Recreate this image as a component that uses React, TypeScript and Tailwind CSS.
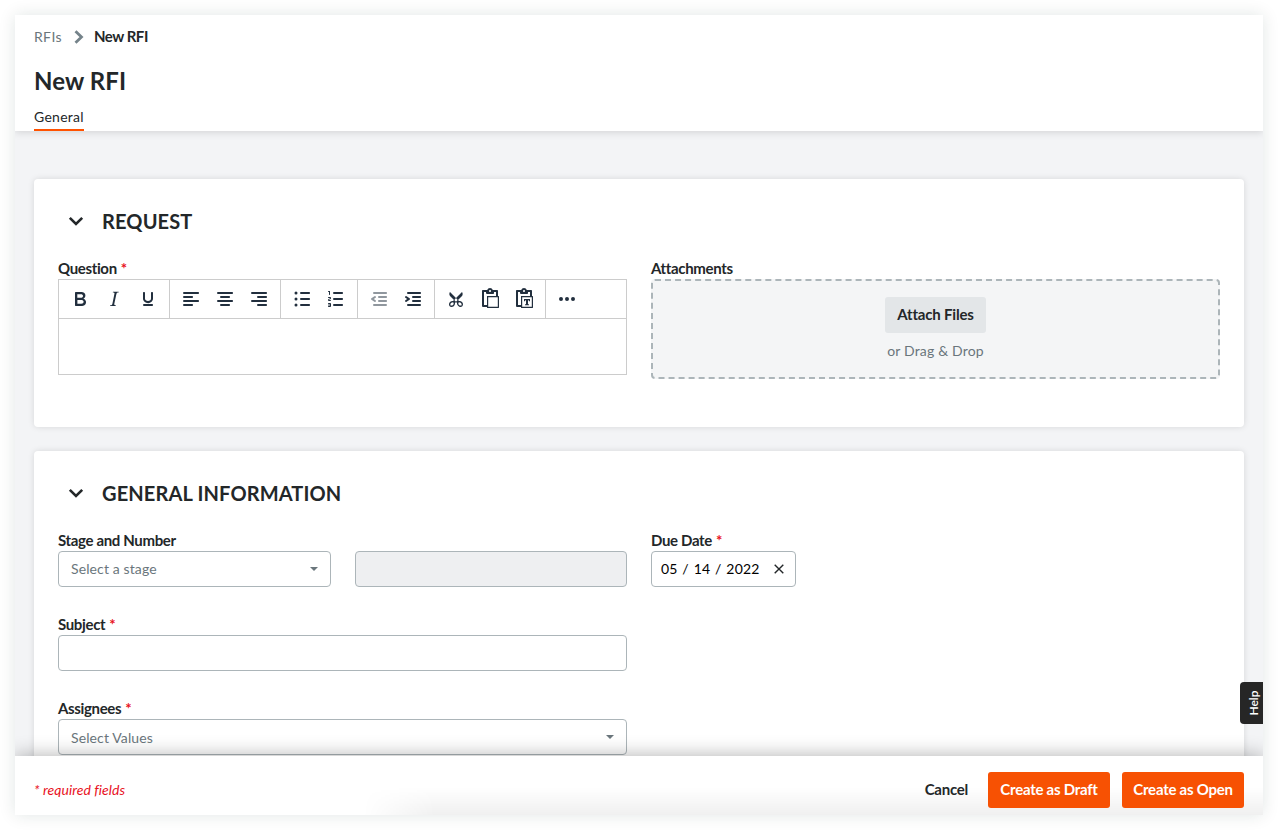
import { useState } from 'react'
import type { ReactNode } from 'react'

const ALIGN_LEFT = 'M5 5h14c.6 0 1 .4 1 1s-.4 1-1 1H5a1 1 0 110-2zm0 4h8c.6 0 1 .4 1 1s-.4 1-1 1H5a1 1 0 110-2zm0 8h8c.6 0 1 .4 1 1s-.4 1-1 1H5a1 1 0 010-2zm0-4h14c.6 0 1 .4 1 1s-.4 1-1 1H5a1 1 0 010-2z'
const ALIGN_CENTER = 'M5 5h14c.6 0 1 .4 1 1s-.4 1-1 1H5a1 1 0 110-2zm3 4h8c.6 0 1 .4 1 1s-.4 1-1 1H8a1 1 0 110-2zm0 8h8c.6 0 1 .4 1 1s-.4 1-1 1H8a1 1 0 010-2zm-3-4h14c.6 0 1 .4 1 1s-.4 1-1 1H5a1 1 0 010-2z'
const ALIGN_RIGHT = 'M5 5h14c.6 0 1 .4 1 1s-.4 1-1 1H5a1 1 0 110-2zm6 4h8c.6 0 1 .4 1 1s-.4 1-1 1h-8a1 1 0 010-2zm0 8h8c.6 0 1 .4 1 1s-.4 1-1 1h-8a1 1 0 010-2zm-6-4h14c.6 0 1 .4 1 1s-.4 1-1 1H5a1 1 0 010-2z'
const BOLD = 'M7.8 19c-.3 0-.5 0-.6-.2l-.2-.5V5.7c0-.2 0-.4.2-.5l.6-.2h5c1.5 0 2.7.3 3.5 1 .7.6 1.1 1.4 1.1 2.5a3 3 0 01-.6 1.9c-.4.6-1 1-1.6 1.2.4.1.9.3 1.3.6s.8.7 1 1.2c.4.4.5 1 .5 1.6 0 1.3-.4 2.3-1.3 3-.8.7-2.1 1-3.8 1H7.8zm5-8.3c.6 0 1.2-.1 1.6-.5.4-.3.6-.7.6-1.3 0-1.1-.8-1.7-2.3-1.7H9.3v3.5h3.4zm.5 6c.7 0 1.3-.1 1.7-.4.4-.4.6-.9.6-1.5s-.2-1-.7-1.4c-.4-.3-1-.4-2-.4H9.4v3.8h4z'
const ITALIC = 'M16.7 4.7l-.1.9h-.3c-.6 0-1 0-1.4.3-.3.3-.4.6-.5 1.1l-2.1 9.8v.6c0 .5.4.8 1.4.8h.2l-.2.8H8l.2-.8h.2c1.1 0 1.8-.5 2-1.5l2-9.8.1-.5c0-.6-.4-.8-1.4-.8h-.3l.2-.9h5.8z'
const UNDERLINE = 'M16 5c.6 0 1 .4 1 1v5.5a4 4 0 01-.4 1.8l-1 1.4a5.3 5.3 0 01-5.5 1 5 5 0 01-1.6-1c-.5-.4-.8-.9-1.1-1.4a4 4 0 01-.4-1.8V6c0-.6.4-1 1-1s1 .4 1 1v5.5c0 .3 0 .6.2 1l.6.7a3.3 3.3 0 002.2.8 3.4 3.4 0 002.2-.8c.3-.2.4-.5.6-.8l.2-.9V6c0-.6.4-1 1-1zM8 17h8c.6 0 1 .4 1 1s-.4 1-1 1H8a1 1 0 010-2z'
const BULLETS = 'M11 5h8c.6 0 1 .4 1 1s-.4 1-1 1h-8a1 1 0 010-2zm0 6h8c.6 0 1 .4 1 1s-.4 1-1 1h-8a1 1 0 010-2zm0 6h8c.6 0 1 .4 1 1s-.4 1-1 1h-8a1 1 0 010-2zM4.5 6a1.5 1.5 0 013 0 1.5 1.5 0 01-3 0zm0 6a1.5 1.5 0 013 0 1.5 1.5 0 01-3 0zm0 6a1.5 1.5 0 013 0 1.5 1.5 0 01-3 0z'
const NUMBERS = 'M10 17h8c.6 0 1 .4 1 1s-.4 1-1 1h-8a1 1 0 010-2zm0-6h8c.6 0 1 .4 1 1s-.4 1-1 1h-8a1 1 0 010-2zm0-6h8c.6 0 1 .4 1 1s-.4 1-1 1h-8a1 1 0 110-2zM6 4v3.5c0 .3-.2.5-.5.5a.5.5 0 01-.5-.5V5h-.5a.5.5 0 010-1H6zm-1 8.8l.2.2h1.3c.3 0 .5.2.5.5s-.2.5-.5.5H4.9a1 1 0 01-.9-1V13c0-.4.3-.8.6-1l1.2-.4.2-.3a.2.2 0 00-.2-.2H4.5a.5.5 0 01-.5-.5c0-.3.2-.5.5-.5h1.6c.5 0 .9.4.9 1v.1c0 .4-.3.8-.6 1l-1.2.4-.2.3zM7 17v2c0 .6-.4 1-1 1H4.5a.5.5 0 010-1h1.2c.2 0 .3-.1.3-.3 0-.2-.1-.3-.3-.3H4.4a.4.4 0 110-.8h1.3c.2 0 .3-.1.3-.3 0-.2-.1-.3-.3-.3H4.5a.5.5 0 110-1H6c.6 0 1 .4 1 1z'
const OUTDENT = 'M7 5h12c.6 0 1 .4 1 1s-.4 1-1 1H7a1 1 0 110-2zm5 4h7c.6 0 1 .4 1 1s-.4 1-1 1h-7a1 1 0 010-2zm0 4h7c.6 0 1 .4 1 1s-.4 1-1 1h-7a1 1 0 010-2zm-5 4h12a1 1 0 010 2H7a1 1 0 010-2zm1.6-3.8a1 1 0 01-1.2 1.6l-3-2a1 1 0 010-1.6l3-2a1 1 0 011.2 1.6L6.8 12l1.8 1.2z'
const INDENT = 'M7 5h12c.6 0 1 .4 1 1s-.4 1-1 1H7a1 1 0 110-2zm5 4h7c.6 0 1 .4 1 1s-.4 1-1 1h-7a1 1 0 010-2zm0 4h7c.6 0 1 .4 1 1s-.4 1-1 1h-7a1 1 0 010-2zm-5 4h12a1 1 0 010 2H7a1 1 0 010-2zm-2.6-3.8L6.2 12l-1.8-1.2a1 1 0 011.2-1.6l3 2a1 1 0 010 1.6l-3 2a1 1 0 11-1.2-1.6z'
const CUT = 'M18 15c.6.7 1 1.4 1 2.3 0 .8-.2 1.5-.7 2l-.8.5-1 .2c-.4 0-.8 0-1.2-.3a3.9 3.9 0 01-2.1-2.2c-.2-.5-.3-1-.2-1.5l-1-1-1 1c0 .5 0 1-.2 1.5-.1.5-.4 1-.9 1.4-.3.4-.7.6-1.2.8l-1.2.3c-.4 0-.7 0-1-.2-.3 0-.6-.3-.8-.5-.5-.5-.8-1.2-.7-2 0-.9.4-1.6 1-2.2A3.7 3.7 0 018.6 14H9l1-1-4-4-.5-1a3.3 3.3 0 010-2c0-.4.3-.7.5-1l6 6 6-6 .5 1a3.3 3.3 0 010 2c0 .4-.3.7-.5 1l-4 4 1 1h.5c.4 0 .8 0 1.2.3.5.2.9.4 1.2.8zm-8.5 2.2l.1-.4v-.3-.4a1 1 0 00-.2-.5 1 1 0 00-.4-.2 1.6 1.6 0 00-.8 0 2.6 2.6 0 00-.8.3 2.5 2.5 0 00-.9 1.1l-.1.4v.7l.2.5.5.2h.7a2.5 2.5 0 00.8-.3 2.8 2.8 0 001-1zm2.5-2.8c.4 0 .7-.1 1-.4.3-.3.4-.6.4-1s-.1-.7-.4-1c-.3-.3-.6-.4-1-.4s-.7.1-1 .4c-.3.3-.4.6-.4 1s.1.7.4 1c.3.3.6.4 1 .4zm5.4 4l.2-.5v-.4-.3a2.6 2.6 0 00-.3-.8 2.4 2.4 0 00-.7-.7 2.5 2.5 0 00-.8-.3 1.5 1.5 0 00-.8 0 1 1 0 00-.4.2 1 1 0 00-.2.5 1.5 1.5 0 000 .7v.4l.3.4.3.4a2.8 2.8 0 00.8.5l.4.1h.7l.5-.2z'
const PASTE = 'M18 9V5h-2v1c0 .6-.4 1-1 1H9a1 1 0 01-1-1V5H6v13h3V9h9zM9 20H5a1 1 0 01-1-1V4c0-.6.4-1 1-1h4.2A3 3 0 0112 1a3 3 0 012.8 2H19c.6 0 1 .4 1 1v5h.5c.3 0 .5.2.5.5v11c0 .3-.2.5-.5.5h-11a.5.5 0 01-.5-.5V20zm1.2-9.8v9.6h9.6v-9.6h-9.6zM12 3a1 1 0 00-1 1c0 .5.4 1 1 1s1-.5 1-1-.4-1-1-1z'
const PASTE_TEXT = PASTE + 'M12 12h6v2.2h-.9l-.4-1H16v4.1h1v1h-4v-1h1v-4.1h-.7l-.4 1H12z'
const MORE = 'M6 10a2 2 0 100 4 2 2 0 000-4zm12 0a2 2 0 100 4 2 2 0 000-4zm-6 0a2 2 0 100 4 2 2 0 000-4z'

const toolbar = [
  [{ name: 'Bold', d: BOLD }, { name: 'Italic', d: ITALIC }, { name: 'Underline', d: UNDERLINE }],
  [{ name: 'Align left', d: ALIGN_LEFT }, { name: 'Align center', d: ALIGN_CENTER }, { name: 'Align right', d: ALIGN_RIGHT }],
  [{ name: 'Bullet list', d: BULLETS }, { name: 'Numbered list', d: NUMBERS }],
  [{ name: 'Decrease indent', d: OUTDENT, disabled: true }, { name: 'Increase indent', d: INDENT }],
  [{ name: 'Cut', d: CUT }, { name: 'Paste', d: PASTE }, { name: 'Paste as text', d: PASTE_TEXT }],
  [{ name: 'More', d: MORE }],
]

function Label({ children, required }: { children: ReactNode; required?: boolean }) {
  return (
    <div className="h-5 text-[15px] leading-[18px] font-bold tracking-[-0.35px] text-[#232729] whitespace-nowrap">
      {children}
      {required && <span className="ml-1 text-[#e8111d]">*</span>}
    </div>
  )
}

function Section({ title, className, children }: { title: string; className: string; children: ReactNode }) {
  const [open, setOpen] = useState(true)

  return (
    <section className={`shrink-0 px-6 rounded bg-white shadow-[0_0_6px_rgba(0,0,0,0.12)] ${className}`}>
      <button onClick={() => setOpen(!open)} className="flex items-center h-20 pt-1 pl-2.5">
        <svg width="16" height="16" viewBox="0 0 16 16" fill="none" stroke="#232729" strokeWidth="2.6" className="mr-[18px]">
          <path d="M1.8 4.8L8 11l6.2-6.2" />
        </svg>
        <h2 className="text-xl leading-7 font-bold uppercase tracking-[0.14px] text-[#232729]">{title}</h2>
      </button>
      {open && children}
    </section>
  )
}

function Select({ placeholder, className = '' }: { placeholder: string; className?: string }) {
  return (
    <button className="flex items-center justify-between w-full h-9 px-3 rounded border border-[#acb5b9] bg-white text-sm tracking-[0.12px] text-[#6a767c]">
      <span className={className}>{placeholder}</span>
      <svg width="8" height="4" viewBox="0 0 8 4" fill="#6a767c"><path d="M0 0h8L4 4z" /></svg>
    </button>
  )
}

export default function App() {
  const [dueDate, setDueDate] = useState(['05', '14', '2022'])

  return (
    <div className="h-[830px] w-[1278px] p-[15px] overflow-hidden bg-white font-[Lato,sans-serif] text-sm text-[#232729]">
      <div className="relative flex flex-col w-[1248px] h-[800px] shadow-[0_0_16px_rgba(20,50,40,0.12)]">
        {/* Header */}
        <header className="relative z-10 h-[116px] shrink-0 flex flex-col px-[19px] bg-white shadow-[0_1px_8px_rgba(0,0,0,0.15)] [clip-path:inset(0_0_-12px_0)]">
          <nav className="flex items-center h-5 mt-3 leading-5">
            <a className="tracking-[0.35px] text-[#6a767c]">RFIs</a>
            <svg width="10" height="14" viewBox="0 0 10 14" fill="none" stroke="#75838a" strokeWidth="2.8" className="ml-3 mr-2.5">
              <path d="M1.5 1.2L7.5 7l-6 5.8" />
            </svg>
            <span className="pb-0.5 text-[15px] font-bold tracking-[-0.45px]">New RFI</span>
          </nav>
          <h1 className="mt-4 h-9 text-2xl leading-9 font-bold tracking-[0.1px]">New RFI</h1>
          <div className="mt-auto h-[25px] self-start border-b-2 border-[#ff5200] leading-[22px] tracking-[0.28px]">General</div>
        </header>

        {/* Form */}
        <main className="flex-1 min-h-0 overflow-hidden flex flex-col gap-6 px-[19px] pt-12 bg-[#f3f4f6]">
          <Section title="Request" className="h-[248px]">
            <div className="grid grid-cols-2 gap-6">
              <div>
                <Label required>Question</Label>
                <div className="h-24 flex flex-col border border-[#ccc] bg-white">
                  <div className="flex h-[39px] border-b border-[#ccc]">
                    {toolbar.map((group, i) => (
                      <div key={i} className={`flex px-1 ${i < toolbar.length - 1 ? 'border-r border-[#ccc]' : ''}`}>
                        {group.map((tool) => (
                          <button key={tool.name} aria-label={tool.name} className="size-[34px] mt-0.5 flex items-center justify-center">
                            <svg
                              width="24"
                              height="24"
                              viewBox="0 0 24 24"
                              fillRule="evenodd"
                              className={'disabled' in tool ? 'fill-[#222f3e]/50' : 'fill-[#222f3e]'}
                            >
                              <path d={tool.d} />
                            </svg>
                          </button>
                        ))}
                      </div>
                    ))}
                  </div>
                  <div className="flex-1" contentEditable suppressContentEditableWarning />
                </div>
              </div>
              <div>
                <Label>Attachments</Label>
                <div className="h-[100px] flex flex-col items-center pt-4 rounded border-2 border-dashed border-[#acb5b9] bg-[#f4f5f6]">
                  <button className="w-[101px] h-9 rounded-[3px] bg-[#e3e6e8] text-[15px] font-bold tracking-[-0.2px]">Attach Files</button>
                  <p className="mt-2 leading-5 tracking-[0.17px] text-[#6a767c]">or Drag &amp; Drop</p>
                </div>
              </div>
            </div>
          </Section>

          <Section title="General Information" className="h-[400px]">
            <div className="grid grid-cols-2 gap-x-6 gap-y-7">
              <div>
                <Label>Stage and Number</Label>
                <div className="grid grid-cols-2 gap-6">
                  <Select placeholder="Select a stage" />
                  <div className="h-9 rounded border border-[#acb5b9] bg-[#eeeff1]" />
                </div>
              </div>
              <div>
                <Label required>Due Date</Label>
                <div className="flex items-center w-[145px] h-9 pl-[9px] pr-[11px] rounded border border-[#acb5b9] bg-white tracking-[0.15px] text-black">
                  <span className="whitespace-pre [word-spacing:1.1px]">{dueDate.join(' / ')}</span>
                  <button aria-label="Clear" className="ml-auto" onClick={() => setDueDate([])}>
                    <svg width="10" height="10" viewBox="0 0 10 10" stroke="#232729" strokeWidth="1.4"><path d="M.7.7l8.6 8.6M9.3.7L.7 9.3" /></svg>
                  </button>
                </div>
              </div>
              <div className="col-start-1">
                <Label required>Subject</Label>
                <input className="block w-full h-9 px-3 rounded border border-[#acb5b9] bg-white" />
              </div>
              <div className="col-start-1">
                <Label required>Assignees</Label>
                <Select placeholder="Select Values" className="pt-0.5" />
              </div>
            </div>
          </Section>
        </main>

        {/* Footer */}
        <footer className="relative z-10 h-[59px] shrink-0 flex items-center justify-between px-[19px] pt-2 bg-white shadow-[0_0_20px_rgba(0,0,0,0.32)] [clip-path:inset(-24px_0_0_0)]">
          <div className="absolute right-0 bottom-0 w-[900px] h-7 bg-linear-to-b from-transparent to-black/6 [mask-image:linear-gradient(to_right,transparent,black_8%)]" />
          <p className="relative italic tracking-[0.05px] text-[#e8111d]">* required fields</p>
          <div className="relative flex gap-3 text-[15px] font-bold tracking-[-0.25px]">
            <button className="h-9 px-2">Cancel</button>
            <button className="w-[122px] h-9 rounded-[3px] bg-[#f75103] text-white">Create as Draft</button>
            <button className="w-[122px] h-9 rounded-[3px] bg-[#f75103] text-white">Create as Open</button>
          </div>
        </footer>

        <button className="absolute z-20 right-0 top-[667px] w-[23px] h-[42px] flex items-center justify-center rounded-l bg-[#262626] text-white text-xs font-semibold">
          <span className="-rotate-90 translate-x-0.5">Help</span>
        </button>
      </div>
    </div>
  )
}
